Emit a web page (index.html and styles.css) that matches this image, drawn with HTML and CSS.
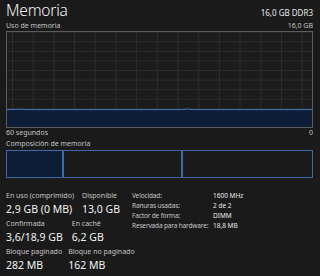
FILE: index.html
```html
<!DOCTYPE html>
<html lang="es">
<head>
    <meta charset="UTF-8">
    <meta name="viewport" content="width=device-width, initial-scale=1.0">
    <title>Memoria</title>
    <link rel="stylesheet" href="styles.css">
</head>
<body>

    <!-- Header -->
    <div class="header">
        <h1>Memoria</h1>
        <span class="hw">16,0 GB DDR3</span>
    </div>

    <!-- Usage graph -->
    <div class="caption">
        <span>Uso de memoria</span>
        <span>16,0 GB</span>
    </div>
    <div class="graph">
        <svg class="usage" viewBox="0 0 306 96" preserveAspectRatio="none">
            <path d="M0 78.5 L14 78 L20 78.5 L176 78.5 L181 77.8 L186 78.5 L306 78.5 L306 96 L0 96 Z" fill="#0d1d36" />
            <path d="M0 78.5 L14 78 L20 78.5 L176 78.5 L181 77.8 L186 78.5 L306 78.5" fill="none" stroke="#4676b8" stroke-width="1" />
        </svg>
    </div>
    <div class="caption">
        <span>60 segundos</span>
        <span>0</span>
    </div>

    <!-- Composition -->
    <div class="caption comp-title">Composición de memoria</div>
    <div class="composition">
        <div class="part used" style="width: 57px"></div>
        <div class="part" style="width: 119px"></div>
        <div class="part grow"></div>
    </div>

    <!-- Stats -->
    <div class="stats">
        <div class="left">
            <div class="row first">
                <div class="stat">
                    <div class="label">En uso (comprimido)</div>
                    <div class="value">2,9 GB (0 MB)</div>
                </div>
                <div class="stat">
                    <div class="label">Disponible</div>
                    <div class="value">13,0 GB</div>
                </div>
            </div>
            <div class="row second">
                <div class="stat">
                    <div class="label">Confirmada</div>
                    <div class="value">3,6/18,9 GB</div>
                </div>
                <div class="stat">
                    <div class="label">En caché</div>
                    <div class="value">6,2 GB</div>
                </div>
            </div>
            <div class="row">
                <div class="stat">
                    <div class="label">Bloque paginado</div>
                    <div class="value">282 MB</div>
                </div>
                <div class="stat">
                    <div class="label">Bloque no paginado</div>
                    <div class="value">162 MB</div>
                </div>
            </div>
        </div>

        <div class="specs">
            <span>Velocidad:</span><span>1600 MHz</span>
            <span>Ranuras usadas:</span><span>2 de 2</span>
            <span>Factor de forma:</span><span>DIMM</span>
            <span>Reservada para hardware:</span><span>18,8 MB</span>
        </div>
    </div>

</body>
</html>
```

FILE: styles.css
```css
/* Dark task manager panel */
body {
    margin: 0;
    padding: 0 7px 0 6px;
    background: #1a1a1a;
    color: #f2f2f2;
    font-family: "Noto Sans", "Open Sans", sans-serif;
    overflow: hidden;
}

/* Header */
.header {
    display: flex;
    justify-content: space-between;
    align-items: baseline;
    height: 21px;
}

h1 {
    margin: 0;
    font-size: 15.5px;
    line-height: 20px;
    font-weight: 300;
    letter-spacing: -0.2px;
    color: #f4f4f4;
}

.hw {
    font-size: 8px;
    color: #e8e8e8;
}

/* Small captions */
.caption {
    display: flex;
    justify-content: space-between;
    font-size: 7px;
    line-height: 10px;
    color: #c4c4c4;
}

.comp-title {
    margin-top: 1px;
}

/* Graph */
.graph {
    height: 95px;
    border: 1px solid #5c5c5c;
    background-color: #1b1b1b;
    background-image:
        linear-gradient(to bottom, #2c2c2c 1px, transparent 1px),
        linear-gradient(to right, #2c2c2c 1px, transparent 1px);
    background-size: 100% 9.6px, 20.7px 100%;
    background-position: 0 -0.4px, 5px 0;
}

.usage {
    display: block;
    width: 100%;
    height: 100%;
}

/* Composition bar */
.composition {
    display: flex;
    height: 28px;
    margin-top: 1px;
}

.part {
    border: 1px solid #3e6aa8;
    box-sizing: border-box;
}

.part.used {
    background: #0d1d36;
}

.part.grow {
    flex: 1;
}

/* Stats */
.stats {
    display: flex;
    align-items: flex-start;
    margin-top: 13px;
}

.left {
    width: 126px;
}

.row {
    display: flex;
    gap: 6px;
    margin-bottom: 2px;
}

.row.first {
    gap: 8px;
}

.row.second {
    gap: 9px;
}

.label {
    font-size: 7px;
    line-height: 10px;
    color: #c4c4c4;
    white-space: nowrap;
}

.value {
    font-size: 10.5px;
    line-height: 16px;
    white-space: nowrap;
}

.specs {
    display: grid;
    grid-template-columns: 81px auto;
    font-size: 6.5px;
    line-height: 10px;
    letter-spacing: -0.15px;
    color: #c4c4c4;
    white-space: nowrap;
}

.specs span:nth-child(even) {
    color: #e8e8e8;
    letter-spacing: 0;
}
```
